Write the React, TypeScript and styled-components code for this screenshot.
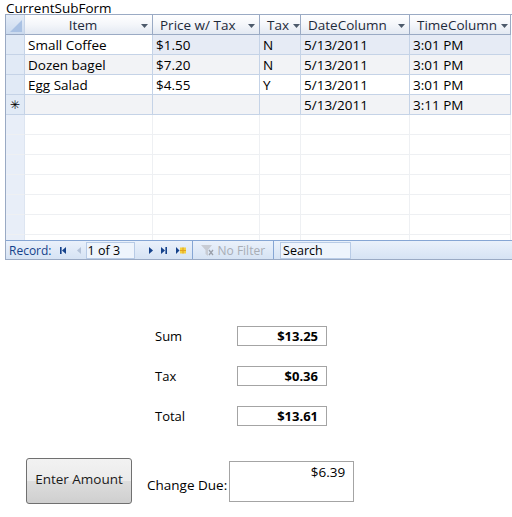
import styled, { createGlobalStyle } from 'styled-components';

const GlobalStyle = createGlobalStyle`
  html, body {
    margin: 0;
    padding: 0;
    background: #ffffff;
  }
  body {
    font-family: 'Open Sans', 'Liberation Sans', sans-serif;
    font-size: 13px;
    color: #000;
  }
`;

const columns = [
  { key: 'item', label: 'Item', width: 128, center: true },
  { key: 'price', label: 'Price w/ Tax', width: 107 },
  { key: 'tax', label: 'Tax', width: 41 },
  { key: 'date', label: 'DateColumn', width: 109 },
  { key: 'time', label: 'TimeColumn', width: 101 },
];

const rows = [
  { item: 'Small Coffee', price: '$1.50', tax: 'N', date: '5/13/2011', time: '3:01 PM' },
  { item: 'Dozen bagel', price: '$7.20', tax: 'N', date: '5/13/2011', time: '3:01 PM' },
  { item: 'Egg Salad', price: '$4.55', tax: 'Y', date: '5/13/2011', time: '3:01 PM' },
];

const totals = [
  { label: 'Sum', value: '$13.25' },
  { label: 'Tax', value: '$0.36' },
  { label: 'Total', value: '$13.61' },
];

export default function App() {
  const gridTemplate = `19px ${columns.map((c) => c.width + 'px').join(' ')}`;
  return (
    <Page>
      <GlobalStyle />
      <FormTitle>CurrentSubForm</FormTitle>
      <Datasheet>
        <Body>
          <Row style={{ gridTemplateColumns: gridTemplate }}>
            <Corner>
              <svg width="12" height="12" viewBox="0 0 12 12">
                <polygon points="12,0 12,12 0,12" fill="#a9c1e3" />
              </svg>
            </Corner>
            {columns.map((c) => (
              <HeaderCell key={c.key} center={c.center}>
                <HeaderLabel center={c.center}>{c.label}</HeaderLabel>
                <Arrow />
              </HeaderCell>
            ))}
          </Row>
          {rows.map((r, i) => (
            <Row key={i} style={{ gridTemplateColumns: gridTemplate }}>
              <Selector />
              {columns.map((c) => (
                <Cell
                  key={c.key}
                  tone={i === 0 ? (c.key === 'item' ? 'current' : 'selected') : i === 1 ? 'alt' : 'plain'}
                >
                  {(r as Record<string, string>)[c.key]}
                </Cell>
              ))}
            </Row>
          ))}
          <Row style={{ gridTemplateColumns: gridTemplate }}>
            <Selector>
              <Star>✳</Star>
            </Selector>
            {columns.map((c) => (
              <Cell key={c.key} tone="alt">
                {c.key === 'date' ? '5/13/2011' : c.key === 'time' ? '3:11 PM' : ''}
              </Cell>
            ))}
          </Row>
          {Array.from({ length: 7 }).map((_, i) => (
            <Row key={'e' + i} style={{ gridTemplateColumns: gridTemplate }}>
              <EmptySelector />
              {columns.map((c) => (
                <EmptyCell key={c.key} />
              ))}
            </Row>
          ))}
        </Body>
        <NavBar>
          <NavLabel>Record:</NavLabel>
          <NavIcon gap={8}>
            <svg width="8" height="9" viewBox="0 0 8 9">
              <rect x="1" y="1" width="1.6" height="7" fill="#15428b" />
              <polygon points="7,1 7,8 3,4.5" fill="#15428b" />
            </svg>
          </NavIcon>
          <NavIcon gap={3}>
            <svg width="8" height="9" viewBox="0 0 8 9">
              <polygon points="6,1 6,8 2,4.5" fill="#b4c3d9" />
            </svg>
          </NavIcon>
          <RecordBox>1 of 3</RecordBox>
          <NavIcon gap={5}>
            <svg width="8" height="9" viewBox="0 0 8 9">
              <polygon points="2,1 2,8 6,4.5" fill="#15428b" />
            </svg>
          </NavIcon>
          <NavIcon gap={7}>
            <svg width="8" height="9" viewBox="0 0 8 9">
              <polygon points="1,1 1,8 5,4.5" fill="#15428b" />
              <rect x="5.4" y="1" width="1.6" height="7" fill="#15428b" />
            </svg>
          </NavIcon>
          <NavIcon gap={6}>
            <svg width="11" height="9" viewBox="0 0 11 9">
              <polygon points="1,1 1,8 4.5,4.5" fill="#15428b" />
              <rect x="5" y="1.5" width="6" height="6" fill="#f4d03f" />
              <path d="M5 4.5h6M8 1.5v6" stroke="#e0a020" strokeWidth="1" />
            </svg>
          </NavIcon>
          <NavDivider />
          <FilterLabel>
            <svg width="15" height="13" viewBox="0 0 15 13">
              <polygon points="1,1 12,1 8,6 8,12 5.5,10 5.5,6" fill="#c8ccd4" />
              <path d="M9 6l4 5M13 6l-4 5" stroke="#9aa0aa" strokeWidth="1.3" />
            </svg>
            No Filter
          </FilterLabel>
          <NavDivider />
          <SearchBox>Search</SearchBox>
        </NavBar>
      </Datasheet>

      <Totals>
        {totals.map((t) => (
          <TotalRow key={t.label}>
            <TotalLabel>{t.label}</TotalLabel>
            <ValueBox>{t.value}</ValueBox>
          </TotalRow>
        ))}
      </Totals>

      <Footer>
        <EnterButton>Enter Amount</EnterButton>
        <ChangeLabel>Change Due:</ChangeLabel>
        <ChangeBox>$6.39</ChangeBox>
      </Footer>
    </Page>
  );
}

function Arrow() {
  return (
    <ArrowWrap>
      <svg width="7" height="4" viewBox="0 0 7 4">
        <polygon points="0,0 7,0 3.5,4" fill="#4d5a6b" />
      </svg>
    </ArrowWrap>
  );
}

const Page = styled.div`
  width: 512px;
  height: 517px;
  display: flex;
  flex-direction: column;
  overflow: hidden;
`;

const FormTitle = styled.div`
  height: 14px;
  line-height: 16px;
  padding-left: 6px;
  font-size: 13.5px;
  white-space: nowrap;
`;

const Datasheet = styled.div`
  margin-left: 5px;
  width: 506px;
  height: 244px;
  border: 1px solid #9aaac4;
  border-right: none;
  background: #fff;
  display: flex;
  flex-direction: column;
`;

const Body = styled.div`
  flex: 1;
  overflow: hidden;
`;

const Row = styled.div`
  display: grid;
  height: 20px;
`;

const Corner = styled.div`
  background: linear-gradient(#e4ecf7, #cbdaee);
  border-right: 1px solid #c5d3e7;
  border-bottom: 1px solid #9aaac4;
  display: flex;
  align-items: flex-end;
  justify-content: flex-end;
  padding: 0 2px 2px 0;
`;

const HeaderCell = styled.div<{ center?: boolean }>`
  background: linear-gradient(#ffffff 0%, #f4f6fa 50%, #e3e9f2 100%);
  border-right: 1px solid #9aaac4;
  border-bottom: 1px solid #9aaac4;
  display: flex;
  align-items: center;
  padding: 0 4px 0 ${(p) => (p.center ? '4px' : '7px')};
  color: #1e2a3a;
  white-space: nowrap;
  font-size: 13.5px;
`;

const HeaderLabel = styled.div<{ center?: boolean }>`
  flex: ${(p) => (p.center ? '1' : '0 0 auto')};
  text-align: ${(p) => (p.center ? 'center' : 'left')};
`;

const ArrowWrap = styled.div`
  display: flex;
  align-items: center;
  margin-left: auto;
  padding-left: 4px;
  padding-top: 2px;
`;

const Selector = styled.div`
  background: #e1eaf6;
  border-right: 1px solid #c5d3e7;
  border-bottom: 1px solid #c5d3e7;
  display: flex;
  align-items: center;
  justify-content: center;
`;

const Star = styled.span`
  font-size: 12px;
  line-height: 1;
  color: #000;
`;

const toneBg = {
  current: '#ffffff',
  selected: '#e6ebf5',
  alt: '#f2f3f6',
  plain: '#ffffff',
};

const Cell = styled.div<{ tone: keyof typeof toneBg }>`
  background: ${(p) => toneBg[p.tone]};
  border-right: 1px solid #c5d3e7;
  border-bottom: 1px solid #c5d3e7;
  padding: 0 3px;
  display: flex;
  align-items: center;
  font-size: 13.5px;
  white-space: nowrap;
  overflow: hidden;
`;

const EmptySelector = styled.div`
  background: #e8eef8;
  border-right: 1px solid #dde5f1;
  border-bottom: 1px solid #eef0f3;
`;

const EmptyCell = styled.div`
  border-right: 1px solid #eef0f3;
  border-bottom: 1px solid #eef0f3;
`;

const NavBar = styled.div`
  height: 18px;
  flex: 0 0 18px;
  border-top: 1px solid #86a6d4;
  background: linear-gradient(#eaf1fb, #d6e3f4);
  display: flex;
  align-items: center;
  padding-left: 3px;
  font-size: 12px;
  color: #15428b;
`;

const NavLabel = styled.span`
  margin-right: 7px;
`;

const NavIcon = styled.span<{ gap: number }>`
  display: inline-flex;
  align-items: center;
  margin-right: ${(p) => p.gap}px;
`;

const RecordBox = styled.span`
  width: 46px;
  height: 15px;
  line-height: 15px;
  border: 1px solid #b8cbe6;
  background: #eef4fc;
  color: #000;
  padding-left: 1px;
  margin-right: 12px;
  font-size: 12.5px;
`;

const NavDivider = styled.span`
  width: 1px;
  height: 18px;
  background: #86a6d4;
  margin: 0 7px 0 0;
`;

const FilterLabel = styled.span`
  display: inline-flex;
  align-items: center;
  gap: 3px;
  color: #a8adb5;
  margin-right: 8px;
  font-size: 12px;
`;

const SearchBox = styled.span`
  width: 67px;
  height: 15px;
  line-height: 15px;
  border: 1px solid #b8cbe6;
  background: #eef4fc;
  color: #000;
  padding-left: 2px;
  margin-left: -1px;
  font-size: 12.5px;
`;

const Totals = styled.div`
  margin-top: 66px;
  padding-left: 155px;
  display: flex;
  flex-direction: column;
  gap: 20px;
`;

const TotalRow = styled.div`
  display: flex;
  align-items: center;
  height: 20px;
`;

const TotalLabel = styled.span`
  width: 82px;
  font-size: 13px;
`;

const ValueBox = styled.div`
  width: 80px;
  height: 18px;
  border: 1px solid #a4a4a4;
  text-align: right;
  padding-right: 8px;
  font-weight: bold;
  font-size: 13px;
  line-height: 18px;
`;

const Footer = styled.div`
  margin-top: 32px;
  padding-left: 26px;
  display: flex;
  align-items: center;
`;

const EnterButton = styled.button`
  width: 106px;
  height: 46px;
  border: 1px solid #707070;
  border-radius: 3px;
  background: linear-gradient(#f2f2f2 0%, #ebebeb 50%, #dddddd 51%, #cfcfcf 100%);
  font-family: inherit;
  font-size: 13.5px;
  color: #1a1a1a;
  padding: 0 0 4px;
  white-space: nowrap;
`;

const ChangeLabel = styled.span`
  margin-left: 15px;
  margin-top: 7px;
  font-size: 13.5px;
  white-space: nowrap;
`;

const ChangeBox = styled.div`
  margin-left: 2px;
  width: 115px;
  height: 38px;
  border: 1px solid #a4a4a4;
  text-align: right;
  padding: 1px 8px 0 0;
  font-size: 13.5px;
`;
